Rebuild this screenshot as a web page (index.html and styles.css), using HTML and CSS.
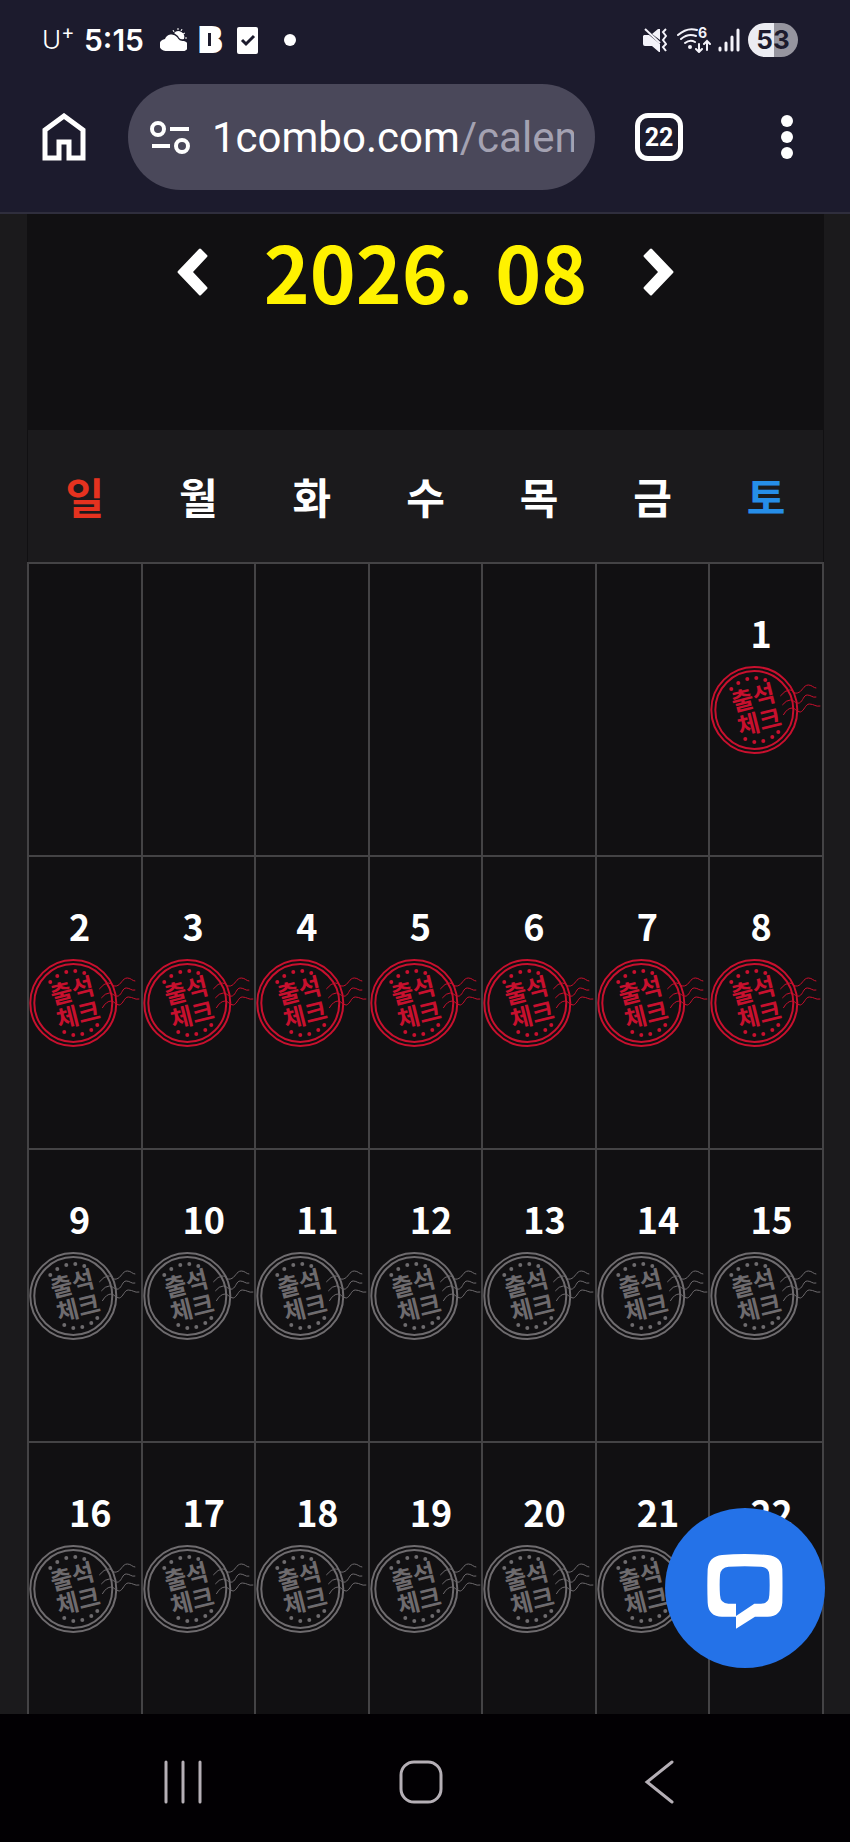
FILE: index.html
```
<!DOCTYPE html>
<html lang="ko">
<head>
    <meta charset="UTF-8">
    <meta name="viewport" content="width=device-width, initial-scale=1.0">
    <title>출석체크 | 1combo.com</title>
    <link rel="stylesheet" href="styles.css">
</head>
<body>
    <!-- stamp shared by every day cell -->
    <svg class="sprite" aria-hidden="true">
        <symbol id="stamp" viewBox="0 0 111 90">
            <g fill="none" stroke="currentColor">
                <circle cx="44" cy="44" r="43" stroke-width="2"/>
                <circle cx="44" cy="44" r="39" stroke-width="2"/>
                <path stroke-width="1" d="M70 30 Q75 24 79 24 C83 24 83 28 87 27 C92 26 93 19 98 19 C102 19 103 22 106 22M72 39 Q76 34 80 34 C84 34 85 38 89 37 C93 35 93 29 97 29 C101 29 102 32 106 31M73 49 Q77 42 82 42 C85 42 86 46 90 46 C94 45 95 38 99 38 C104 38 105 41 110 40"/>
            </g>
            <g fill="currentColor">
                <circle cx="21" cy="23" r="2"/><circle cx="28" cy="17" r="2"/><circle cx="37" cy="13" r="2"/><circle cx="46" cy="12" r="2"/><circle cx="55" cy="14" r="2"/>
                <circle cx="35" cy="73" r="2"/><circle cx="44" cy="76" r="2"/><circle cx="53" cy="75" r="2"/><circle cx="62" cy="71" r="2"/><circle cx="68" cy="66" r="2"/>
            </g>
            <g class="stamp-text" transform="rotate(-14 46 44)">
                <text x="46" y="40">출석</text>
                <text x="46" y="65">체크</text>
            </g>
        </symbol>
    </svg>

    <header class="browser">
        <div class="status-bar">
            <span class="carrier">U<sup>+</sup></span>
            <span class="clock">5:15</span>
            <svg class="ico-weather" width="27" height="24" viewBox="0 0 27 24" fill="#fff">
                <path d="M6 23a6 6 0 0 1-1-12 7 7 0 0 1 12-2c2 3 3 4 7 4a5 5 0 0 1-2 10z"/>
                <path d="M14 5a6 6 0 0 1 10 6c-4 1-5-1-6-3z"/>
                <path d="M13 2l1 2M18 0v2M22 1l-1 2M25 5l-2 1M27 10h-2" stroke="#fff"/>
            </svg>
            <svg class="ico-b" width="24" height="30" viewBox="0 0 24 30">
                <text x="0" y="27">B</text>
                <path d="M5 5h9v19H5z" fill="#fff"/>
                <rect x="9" y="8" width="3" height="13" fill="#1c1b2d"/>
            </svg>
            <svg class="ico-check" width="21" height="27" viewBox="0 0 21 27">
                <rect width="21" height="27" rx="2" fill="#fff"/>
                <path d="M5 13l4 4 8-8" fill="none" stroke="#1c1b2d" stroke-width="3"/>
            </svg>
            <span class="more-dot"></span>
            <span class="spacer"></span>
            <svg class="ico-mute" width="24" height="26" viewBox="0 0 24 26">
                <path d="M1 8h5l11 9v8h-1l-7-6H2q-2 0-2-2V9zM9 7l6-5h2v11z" fill="#f4f3fa"/>
                <path d="M2 2l15 14" stroke="#f4f3fa" stroke-width="2"/>
                <path d="M23 2l-3 3 3 4-3 4 3 4-3 3 3 4" fill="none" stroke="#f4f3fa" stroke-width="2"/>
            </svg>
            <svg class="ico-wifi" width="34" height="26" viewBox="0 0 34 26">
                <g fill="none" stroke="#f4f3fa" stroke-width="2" stroke-linecap="round">
                    <path d="M1 8Q10 0 20 3M4 12q7-6 15-3M8 16q5-4 10-1"/>
                    <path d="M22 17v7M19 22l3 3 3-3M30 23v-8M27 17l3-3 3 3"/>
                </g>
                <circle cx="13" cy="20" r="2" fill="#f4f3fa"/>
                <text x="21" y="11">6</text>
            </svg>
            <svg class="ico-signal" width="22" height="24" viewBox="0 0 22 24" stroke="#f4f3fa" stroke-width="3" stroke-linecap="round">
                <path d="M2 20v2M8 15v7M14 9v13M20 2v20"/>
            </svg>
            <span class="battery">53</span>
        </div>

        <div class="toolbar">
            <button type="button" class="tool home" aria-label="Home">
                <svg width="44" height="48" viewBox="0 0 44 48" fill="none" stroke="#fff" stroke-width="5">
                    <path d="M3 45V17L22 3l19 14v28H27V29H17v16z"/>
                </svg>
            </button>
            <button type="button" class="address">
                <svg width="40" height="34" viewBox="0 0 40 34" fill="none" stroke="#fff" stroke-width="4">
                    <circle cx="8" cy="9" r="6"/><path d="M20 9h19M2 26h18"/><circle cx="32" cy="26" r="6"/>
                </svg>
                <span class="url">1combo.com<span class="path">/calendar</span></span>
            </button>
            <button type="button" class="tool tabs">22</button>
            <button type="button" class="tool menu" aria-label="Menu">
                <svg width="12" height="44" viewBox="0 0 12 44" fill="#fff">
                    <circle cx="6" cy="6" r="6"/><circle cx="6" cy="22" r="6"/><circle cx="6" cy="38" r="6"/>
                </svg>
            </button>
        </div>
    </header>

    <main class="page">
        <div class="calendar-wrap">
            <div class="month-nav">
                <button type="button" class="arrow" aria-label="이전 달">
                    <svg width="32" height="48" viewBox="0 0 32 48"><path d="M24 1l6 6q1 1 0 2L16 24l14 15q1 1 0 2l-6 6q-1 1-2 0L1 25q-1-1 0-2L22 1q1-1 2 0z" fill="#fff"/></svg>
                </button>
                <h1>2026. 08</h1>
                <button type="button" class="arrow" aria-label="다음 달">
                    <svg width="32" height="48" viewBox="0 0 32 48"><path d="M8 1L2 7q-1 1 0 2l14 15L2 39q-1 1 0 2l6 6q1 1 2 0l21-22q1-1 0-2L10 1Q9 0 8 1z" fill="#fff"/></svg>
                </button>
            </div>

            <table class="calendar">
                <thead>
                    <tr><th class="sun">일</th><th>월</th><th>화</th><th>수</th><th>목</th><th>금</th><th class="sat">토</th></tr>
                </thead>
                <tbody>
                    <tr>
                        <td></td><td></td><td></td><td></td><td></td><td></td>
                        <td class="checked"><span>1</span><svg><use href="#stamp"/></svg></td>
                    </tr>
                    <tr>
                        <td class="checked"><span>2</span><svg><use href="#stamp"/></svg></td>
                        <td class="checked"><span>3</span><svg><use href="#stamp"/></svg></td>
                        <td class="checked"><span>4</span><svg><use href="#stamp"/></svg></td>
                        <td class="checked"><span>5</span><svg><use href="#stamp"/></svg></td>
                        <td class="checked"><span>6</span><svg><use href="#stamp"/></svg></td>
                        <td class="checked"><span>7</span><svg><use href="#stamp"/></svg></td>
                        <td class="checked"><span>8</span><svg><use href="#stamp"/></svg></td>
                    </tr>
                    <tr>
                        <td><span>9</span><svg><use href="#stamp"/></svg></td>
                        <td><span>10</span><svg><use href="#stamp"/></svg></td>
                        <td><span>11</span><svg><use href="#stamp"/></svg></td>
                        <td><span>12</span><svg><use href="#stamp"/></svg></td>
                        <td><span>13</span><svg><use href="#stamp"/></svg></td>
                        <td><span>14</span><svg><use href="#stamp"/></svg></td>
                        <td><span>15</span><svg><use href="#stamp"/></svg></td>
                    </tr>
                    <tr>
                        <td><span>16</span><svg><use href="#stamp"/></svg></td>
                        <td><span>17</span><svg><use href="#stamp"/></svg></td>
                        <td><span>18</span><svg><use href="#stamp"/></svg></td>
                        <td><span>19</span><svg><use href="#stamp"/></svg></td>
                        <td><span>20</span><svg><use href="#stamp"/></svg></td>
                        <td><span>21</span><svg><use href="#stamp"/></svg></td>
                        <td><span>22</span><svg><use href="#stamp"/></svg></td>
                    </tr>
                </tbody>
            </table>
        </div>

        <button type="button" class="chat" aria-label="채팅 상담">
            <svg width="76" height="76" viewBox="200 366 228 228">
                <path fill="#fff" fill-rule="evenodd" d="M245 372Q313 366 382 372 424 376 426 415 427 465 426 515 422 556 382 557H344L287 593V557H245Q204 556 202 515 200 465 202 415 205 376 245 372zM265 407Q241 409 239 432 237 462 239 492 240 518 264 518H287V555L342 518H362Q386 518 387 492 389 462 387 432 386 409 362 407 313 404 265 407z"/>
            </svg>
        </button>
    </main>

    <nav class="system-nav">
        <button type="button" aria-label="Recent apps">
            <svg width="44" height="44" viewBox="0 0 44 44"><path d="M5 2v40M22 2v40M39 2v40"/></svg>
        </button>
        <button type="button" aria-label="Home">
            <svg width="44" height="44" viewBox="0 0 44 44"><rect x="2" y="2" width="40" height="40" rx="13"/></svg>
        </button>
        <button type="button" aria-label="Back">
            <svg width="44" height="44" viewBox="0 0 44 44"><path d="M35 2L10 22l25 20"/></svg>
        </button>
    </nav>
</body>
</html>
```
FILE: styles.css
```
:root {
    --chrome: #1c1b2d;
    --pill: #4a485a;
    --page: #1b1a1c;
    --panel: #111012;
    --line: #444345;
    --stamp-on: #c8102e;
    --stamp-off: #6e6b6e;
}
* { box-sizing: border-box; margin: 0; padding: 0; }
body {
    display: flex;
    flex-direction: column;
    height: 100vh;
    overflow: hidden;
    background-color: var(--page);
    color: #fff;
    font-family: "Noto Sans CJK KR", sans-serif;
}
button { border: none; background: none; color: inherit; cursor: pointer; }
svg { display: block; flex-shrink: 0; }
.sprite { position: absolute; width: 0; height: 0; }

/* status bar + toolbar */
.browser {
    background-color: var(--chrome);
    border-bottom: 2px solid #2f2e3d;
    padding-bottom: 22px;
    font-family: Inter, Roboto, sans-serif;
}
.status-bar { display: flex; align-items: center; height: 84px; padding: 0 52px 4px 42px; }
.carrier { font-size: 26px; font-weight: 300; line-height: 32px; width: 42px; }
.carrier sup { font-size: 20px; font-weight: 400; line-height: 0; }
.clock { font-size: 30px; font-weight: 600; line-height: 32px; width: 76px; }
.ico-b { margin-left: 12px; }
.ico-b text { font-size: 34px; font-weight: 900; fill: #fff; stroke: #fff; stroke-width: 2px; }
.ico-check { margin-left: 14px; }
.more-dot { width: 12px; height: 12px; margin-left: 26px; border-radius: 50%; background-color: #fff; }
.spacer { flex: 1; }
.ico-wifi { margin-left: 10px; }
.ico-wifi text { font-size: 14px; font-weight: 700; fill: #f4f3fa; }
.ico-signal { margin-left: 7px; }
.battery {
    width: 50px; margin-left: 8px; border-radius: 17px;
    background: linear-gradient(90deg, #ececf2 53%, #96959f 53%);
    color: var(--chrome); font-size: 26px; font-weight: 700; line-height: 34px; text-align: center;
}
.toolbar { display: flex; align-items: center; padding: 0 39px 0 42px; }
.home { margin-right: 42px; }
.address {
    display: flex; align-items: center; flex: 1; min-width: 0; height: 106px;
    padding: 0 21px 0 22px; border-radius: 53px; background-color: var(--pill);
}
.url {
    flex: 1; min-width: 0; margin-left: 22px; padding-top: 2px; overflow: hidden; white-space: nowrap;
    font-family: Roboto, sans-serif; font-size: 42px; line-height: 56px; text-align: left;
}
.url .path { color: #a4a2b2; }
.tabs {
    width: 48px; height: 48px; margin: 0 80px 0 40px; border: 5px solid #fff; border-radius: 13px;
    font-family: Roboto, sans-serif; font-size: 25px; font-weight: 700;
}
.menu { display: flex; justify-content: center; width: 48px; }

/* calendar */
.page { position: relative; flex: 1; min-height: 0; overflow: hidden; padding: 0 26px 0 27px; }
.calendar-wrap { background-color: var(--panel); }
.month-nav { display: flex; justify-content: center; align-items: flex-start; height: 216px; }
.month-nav h1 { margin: 0 55px; color: #fff200; font-size: 78px; font-weight: 700; line-height: 112px; }
.arrow { padding-top: 34px; }
.calendar { width: 100%; border-collapse: collapse; table-layout: fixed; }
.calendar thead { background-color: var(--page); }
.calendar th { height: 133px; font-size: 42px; font-weight: 700; line-height: 56px; }
.calendar .sun { color: #e5321f; }
.calendar .sat { color: #268ee8; }
.calendar td { height: 293px; border: 2px solid var(--line); color: var(--stamp-off); vertical-align: top; }
.calendar td.checked { color: var(--stamp-on); }
.calendar td span {
    display: block; padding: 40px 0 6px 40px;
    color: #fff; font-size: 36px; font-weight: 700; line-height: 56px;
}
.calendar td svg { width: 100%; height: 90px; }
.stamp-text { fill: currentColor; font-size: 24px; font-weight: 700; text-anchor: middle; }

.chat {
    position: absolute; right: 25px; bottom: 46px;
    display: flex; justify-content: center; align-items: center;
    width: 160px; height: 160px; padding-top: 5px; border-radius: 50%; background-color: #2472e8;
}

.system-nav {
    display: flex; justify-content: center; align-items: center; gap: 194px;
    height: 128px; padding: 8px 9px 0 0; background-color: #020003;
}
.system-nav svg { fill: none; stroke: #b5afb6; stroke-width: 3px; stroke-linecap: round; }
```
